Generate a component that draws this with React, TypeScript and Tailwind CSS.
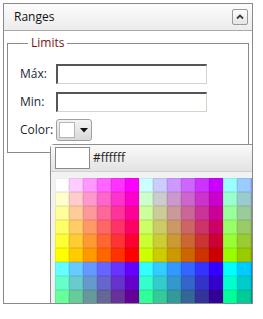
import React from "react";

const levels = ["ff", "cc", "99", "66", "33", "00"];

function cellColor(row: number, col: number): string {
  const band = Math.floor(row / 6);
  const r = row % 6;
  const block = Math.floor(col / 6);
  const g = col % 6;
  const rIdx = Math.min(band * 3 + block, 5);
  return `#${levels[rIdx]}${levels[g]}${levels[r]}`;
}

const rows = Array.from({ length: 10 }, (_, i) => i);
const cols = Array.from({ length: 16 }, (_, i) => i);

export default function App() {
  return (
    <div
      className="w-[263px] h-[319px] bg-white text-[12px] text-black"
      style={{ fontFamily: '"Open Sans", "Noto Sans", sans-serif' }}
    >
      <div className="relative ml-[3px] mt-[3px] w-[250px] h-[301px] border border-[#8a8a8a] overflow-hidden bg-white flex flex-col">
        <div className="h-[27px] shrink-0 flex items-center justify-between pl-[10px] pr-[4px] border-b border-[#a9a9a9] bg-gradient-to-b from-[#fcfcfc] to-[#ececec]">
          <span className="text-[12px] leading-[16px] text-[#111]">Ranges</span>
          <div className="w-[16px] h-[16px] flex items-center justify-center border border-[#9a9a9a] rounded-[2px] bg-gradient-to-b from-[#ffffff] to-[#e4e4e4]">
            <svg width="10" height="10" viewBox="0 0 10 10">
              <path d="M2 6.5 L5 3.5 L8 6.5" fill="none" stroke="#3a3a3a" strokeWidth="1.8" />
            </svg>
          </div>
        </div>

        <fieldset className="mx-[3px] mt-[4px] border border-[#8a8a8a] pl-[12px] pt-[13px] pb-[11px]">
          <legend className="ml-[8px] px-[3px] leading-[16px] text-[#7a1414]">Limits</legend>
          <div className="flex items-center h-[20px]">
            <span className="w-[36px] text-[#1b2636]">Máx:</span>
            <div className="w-[151px] h-[20px] border-t-2 border-l-2 border-t-[#555555] border-l-[#555555] border-b border-r border-b-[#d6d3c9] border-r-[#d6d3c9] bg-white" />
          </div>
          <div className="flex items-center h-[20px] mt-[8px]">
            <span className="w-[36px] text-[#1b2636]">Min:</span>
            <div className="w-[151px] h-[20px] border-t-2 border-l-2 border-t-[#555555] border-l-[#555555] border-b border-r border-b-[#d6d3c9] border-r-[#d6d3c9] bg-white" />
          </div>
          <div className="flex items-center h-[22px] mt-[7px]">
            <span className="w-[36px] text-[#1b2636]">Color:</span>
            <div className="w-[36px] h-[22px] flex items-center pl-[2px] border border-[#a0a0a0] rounded-[3px] bg-gradient-to-b from-[#f3f3f3] to-[#d9d9d9]">
              <div className="w-[16px] h-[16px] bg-white border border-[#b5b5b5]" />
              <svg width="8" height="5" viewBox="0 0 8 5" className="ml-[5px]">
                <path d="M0 0 L8 0 L4 4.5 Z" fill="#111" />
              </svg>
            </div>
          </div>
        </fieldset>

        <div className="absolute left-[46px] top-[140px] w-[260px] h-[220px] border border-[#8e8e8e] rounded-tl-[4px] bg-[#f2f2f2]">
          <div className="h-[27px] flex items-center pl-[4px] border-b border-[#cfcfcf] bg-gradient-to-b from-[#fafafa] to-[#e3e3e3]">
            <div className="w-[35px] h-[22px] bg-white border border-[#8a8a8a]" />
            <span className="ml-[3px] text-[12px] leading-[16px] text-[#222]">#ffffff</span>
          </div>
          <div className="pl-[4px] pt-[6px] flex flex-col">
            {rows.map((r) => (
              <div key={r} className="flex">
                {cols.map((c) => (
                  <div
                    key={c}
                    className="w-[14px] h-[14px] shrink-0 shadow-[inset_0_0_0_1px_rgba(0,0,0,0.07)]"
                    style={{ backgroundColor: cellColor(r, c) }}
                  />
                ))}
              </div>
            ))}
          </div>
        </div>
      </div>
    </div>
  );
}
